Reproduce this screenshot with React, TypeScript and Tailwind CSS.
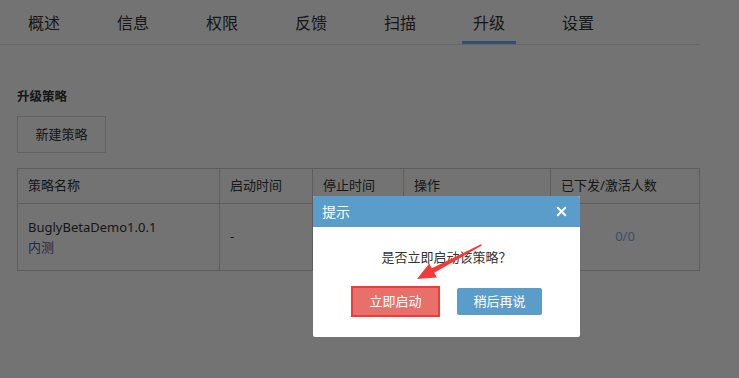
import { X } from 'lucide-react';

const tabs = ['概述', '信息', '权限', '反馈', '扫描', '升级', '设置'];

const font = { fontFamily: '"Noto Sans", "Noto Sans CJK SC", sans-serif' };
const cjk = { fontFamily: '"Noto Sans CJK SC", sans-serif' };

export default function App() {
  return (
    <div className="relative h-[378px] w-[739px] overflow-hidden bg-white text-[#333]" style={font}>
      {/* Tabs */}
      <div className="flex h-[45px] w-[700px] gap-[35px] border-b border-[#e5e5e5] pl-[17px]">
        {tabs.map((t) => (
          <div
            key={t}
            className={
              'flex h-[44px] items-center px-[11px] pt-[5px] text-[16px] ' +
              (t === '升级' ? 'border-b-[3px] border-[#66b3ff] pb-0' : 'pb-[3px]')
            }
          >
            {t}
          </div>
        ))}
      </div>

      {/* Content */}
      <div className="pl-[17px] pt-[43px]">
        <h2 className="text-[12.5px] font-bold leading-[18px]">升级策略</h2>
        <button className="mt-[10px] flex h-[37px] w-[89px] items-center justify-center border border-[#dadada] text-[13px]">
          新建策略
        </button>

        <table className="mt-[15px] w-[683px] table-fixed border-collapse text-[13px]">
          <colgroup>
            <col className="w-[202px]" />
            <col className="w-[93px]" />
            <col className="w-[91px]" />
            <col className="w-[147px]" />
            <col />
          </colgroup>
          <thead>
            <tr className="h-[35px]">
              {['策略名称', '启动时间', '停止时间', '操作', '已下发/激活人数'].map((h) => (
                <th key={h} className="border border-[#cfcfcf] px-[10px] text-left font-normal">
                  {h}
                </th>
              ))}
            </tr>
          </thead>
          <tbody>
            <tr className="h-[67px]">
              <td className="border border-[#cfcfcf] px-[10px] leading-[20px]">
                <div>BuglyBetaDemo1.0.1</div>
                <div className="text-[#3f64a8]">内测</div>
              </td>
              <td className="border border-[#cfcfcf] px-[10px]">-</td>
              <td className="border border-[#cfcfcf] px-[10px]"></td>
              <td className="border border-[#cfcfcf] px-[10px]"></td>
              <td className="border border-[#cfcfcf] px-[10px] text-center text-[#88abee]">0/0</td>
            </tr>
          </tbody>
        </table>
      </div>

      {/* Mask */}
      <div className="absolute inset-0 bg-black/55" />

      {/* Dialog */}
      <div className="absolute left-[313px] top-[196px] w-[267px] overflow-hidden rounded-[2px] bg-white">
        <div className="flex h-[31px] items-center justify-between bg-[#5b9dca] pl-[9px] pr-[11px] text-white">
          <span className="text-[14px]">提示</span>
          <X className="h-[15px] w-[15px]" strokeWidth={3.2} />
        </div>
        <div className="flex h-[110px] flex-col items-center">
          <p className="mt-[20px] text-[13px] leading-[20px] text-[#333]" style={cjk}>
            是否立即启动该策略？
          </p>
          <div className="mt-[19px] flex items-center gap-[17px]">
            <div className="border-[2px] border-[#f33a3a]">
              <button className="flex h-[27px] w-[85px] items-center justify-center bg-[#e8706b] text-[13px] text-white">
                立即启动
              </button>
            </div>
            <button className="flex h-[27px] w-[85px] items-center justify-center rounded-[2px] bg-[#5b9dca] text-[13px] text-white">
              稍后再说
            </button>
          </div>
        </div>
      </div>

      {/* Annotation arrow */}
      <svg className="absolute left-0 top-0" width="739" height="378" viewBox="0 0 739 378">
        <polygon
          points="481,244.3 431.8,268.3 429.2,263.5 417,279 436.8,277.5 434.2,272.7 481.8,245.6"
          fill="#f33a3a"
        />
      </svg>
    </div>
  );
}
